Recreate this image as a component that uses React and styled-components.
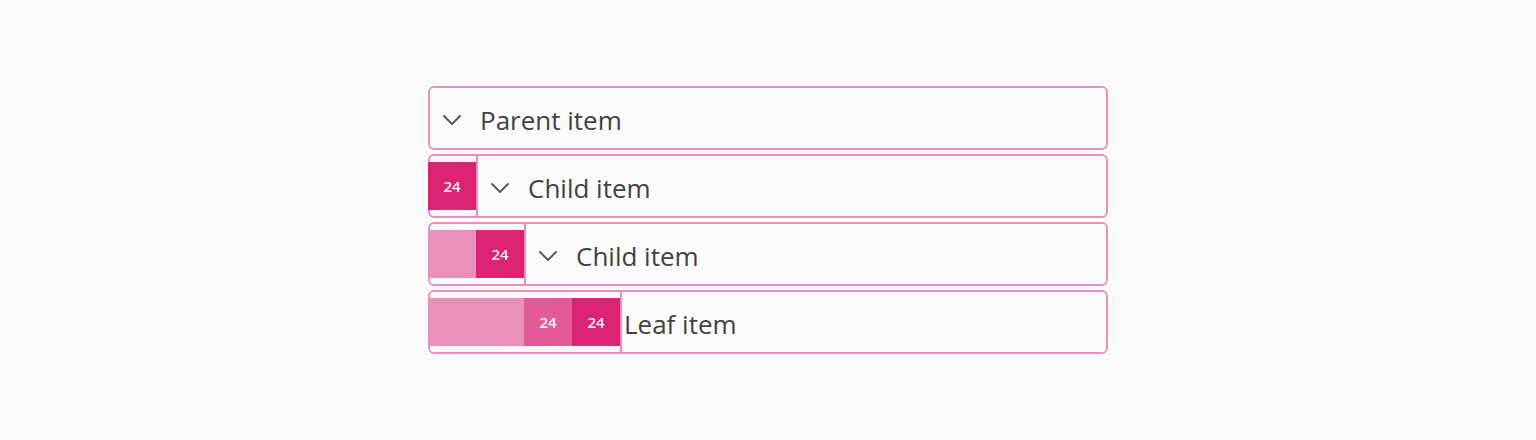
import React from "react";
import styled, { createGlobalStyle } from "styled-components";

const Global = createGlobalStyle`
  html, body { margin: 0; padding: 0; background: #fafafa; }
  body { font-family: "Open Sans", "Noto Sans", sans-serif; }
`;

const Page = styled.div`
  width: 1536px;
  height: 440px;
  display: flex;
  align-items: center;
  justify-content: center;
`;

const Tree = styled.div`
  width: 680px;
  display: flex;
  flex-direction: column;
  gap: 4px;
`;

const Row = styled.div`
  box-sizing: border-box;
  height: 64px;
  border: 2px solid #ee8fbb;
  border-radius: 6px;
  display: flex;
  align-items: stretch;
`;

const Aside = styled.div`
  margin-left: -2px;
  display: flex;
  align-items: center;
  border-right: 2px solid #ee8fbb;
`;

const tones = {
  light: "#e991b8",
  mid: "#e35a97",
  dark: "#dc2272",
};

const Badge = styled.div`
  width: ${(p) => p.$w || 48}px;
  height: 48px;
  background: ${(p) => tones[p.$tone]};
  color: #fff;
  font-family: "Noto Sans", "Open Sans", sans-serif;
  font-size: 15px;
  font-weight: 500;
  display: flex;
  align-items: center;
  justify-content: center;
`;

const Main = styled.div`
  flex: 1;
  display: flex;
  align-items: center;
  gap: 4px;
`;

const Chevron = styled.span`
  width: 44px;
  padding-top: 3px;
  display: flex;
  align-items: center;
  justify-content: center;
  color: #555555;
`;

const Label = styled.span`
  font-size: 26px;
  color: #424242;
  line-height: 1;
  padding: 4px 0 0 2px;
`;

const ChevronDown = () => (
  <svg width="20" height="20" viewBox="0 0 20 20" fill="none">
    <path d="M2 6 L10 14 L18 6" stroke="currentColor" strokeWidth="1.8" strokeLinecap="round" strokeLinejoin="round" />
  </svg>
);

const rows = [
  { label: "Parent item", badges: [], branch: true },
  { label: "Child item", badges: [{ tone: "dark", text: "24" }], branch: true },
  {
    label: "Child item",
    badges: [{ tone: "light", text: "" }, { tone: "dark", text: "24" }],
    branch: true,
  },
  {
    label: "Leaf item",
    badges: [
      { tone: "light", text: "", w: 96 },
      { tone: "mid", text: "24" },
      { tone: "dark", text: "24" },
    ],
    branch: false,
  },
];

export default function App() {
  return (
    <>
      <Global />
      <Page>
        <Tree>
          {rows.map((r, i) => (
            <Row key={i}>
              {r.badges.length > 0 && (
                <Aside>
                  {r.badges.map((b, j) => (
                    <Badge key={j} $tone={b.tone} $w={b.w}>
                      {b.text}
                    </Badge>
                  ))}
                </Aside>
              )}
              <Main>
                {r.branch && (
                  <Chevron>
                    <ChevronDown />
                  </Chevron>
                )}
                <Label>{r.label}</Label>
              </Main>
            </Row>
          ))}
        </Tree>
      </Page>
    </>
  );
}
